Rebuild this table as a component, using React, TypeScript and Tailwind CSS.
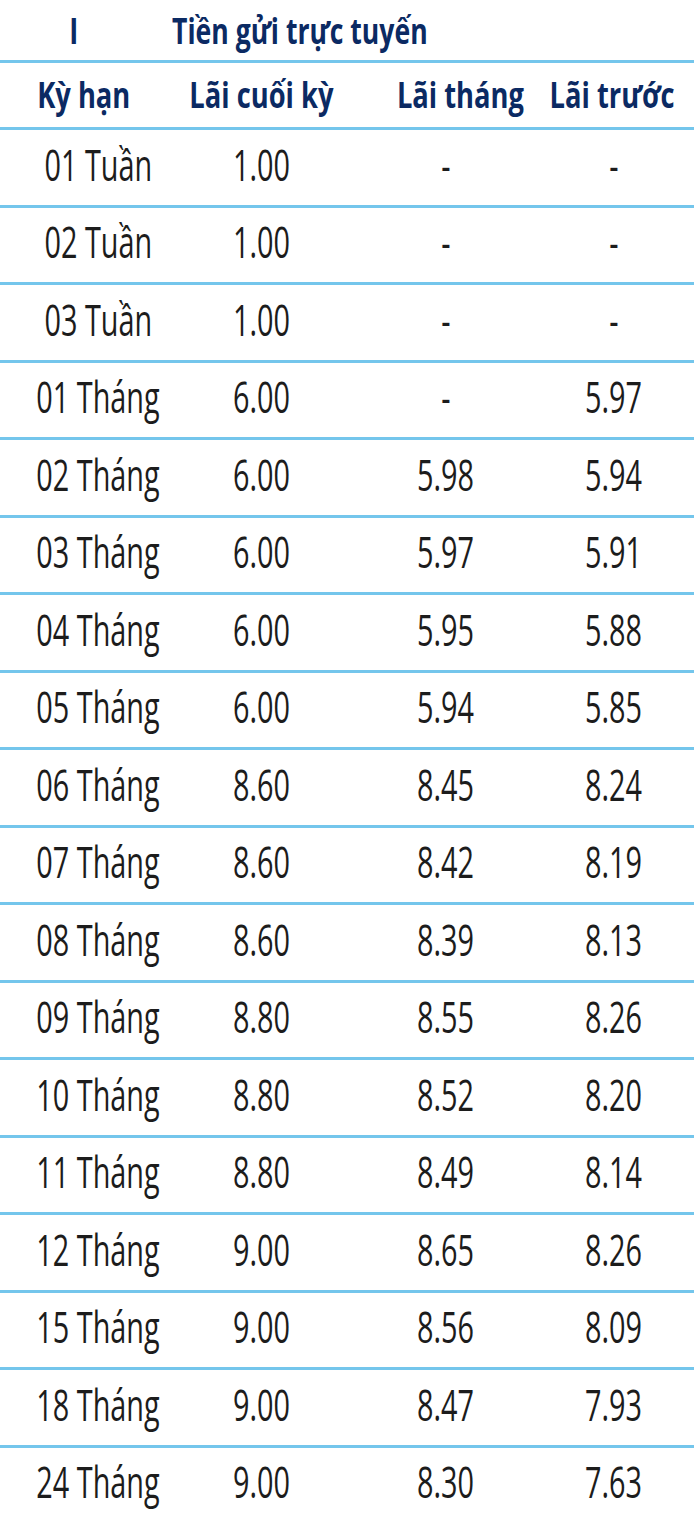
import React from "react";

const rows: [string, string, string, string][] = [
  ["01 Tuần", "1.00", "-", "-"],
  ["02 Tuần", "1.00", "-", "-"],
  ["03 Tuần", "1.00", "-", "-"],
  ["01 Tháng", "6.00", "-", "5.97"],
  ["02 Tháng", "6.00", "5.98", "5.94"],
  ["03 Tháng", "6.00", "5.97", "5.91"],
  ["04 Tháng", "6.00", "5.95", "5.88"],
  ["05 Tháng", "6.00", "5.94", "5.85"],
  ["06 Tháng", "8.60", "8.45", "8.24"],
  ["07 Tháng", "8.60", "8.42", "8.19"],
  ["08 Tháng", "8.60", "8.39", "8.13"],
  ["09 Tháng", "8.80", "8.55", "8.26"],
  ["10 Tháng", "8.80", "8.52", "8.20"],
  ["11 Tháng", "8.80", "8.49", "8.14"],
  ["12 Tháng", "9.00", "8.65", "8.26"],
  ["15 Tháng", "9.00", "8.56", "8.09"],
  ["18 Tháng", "9.00", "8.47", "7.93"],
  ["24 Tháng", "9.00", "8.30", "7.63"],
];

function D({ children }: { children: React.ReactNode }) {
  return (
    <div className="flex items-center justify-center">
      <span className="inline-block whitespace-nowrap [transform:scaleX(0.67)]">{children}</span>
    </div>
  );
}

function H({ children }: { children: React.ReactNode }) {
  return (
    <div className="flex items-center justify-center">
      <span className="inline-block whitespace-nowrap [transform:scaleX(0.78)]">{children}</span>
    </div>
  );
}

export default function App() {
  return (
    <div className="w-[700px] h-[1514px] overflow-hidden bg-white [font-family:'Open_Sans',sans-serif]">
      <div className="h-[60px] flex items-center text-[35px] font-bold text-[#0b2a63] leading-none">
        <span className="w-[80px] flex justify-end">
          <span className="inline-block [transform:scaleX(0.78)]">I</span>
        </span>
        <span className="ml-[92px] inline-block whitespace-nowrap origin-left [transform:scaleX(0.76)]">
          Tiền gửi trực tuyến
        </span>
      </div>
      <div className="w-[694px] h-[67px] border-t-[3px] border-[#74c6ec] grid grid-cols-[168px_186px_212px_92px] text-[35px] font-bold text-[#0b2a63] leading-none pb-[2px]">
        <H>Kỳ hạn</H>
        <H>Lãi cuối kỳ</H>
        <H>Lãi tháng</H>
        <H>Lãi trước</H>
      </div>
      {rows.map((r, i) => (
        <div
          key={i}
          className="w-[694px] h-[77.5px] border-t-[3px] border-[#74c6ec] grid grid-cols-[196px_132px_236px_100px] text-[43px] text-[#1c1c1c] leading-none pb-[6px]"
        >
          <D>{r[0]}</D>
          <D>{r[1]}</D>
          <D>{r[2]}</D>
          <D>{r[3]}</D>
        </div>
      ))}
    </div>
  );
}
